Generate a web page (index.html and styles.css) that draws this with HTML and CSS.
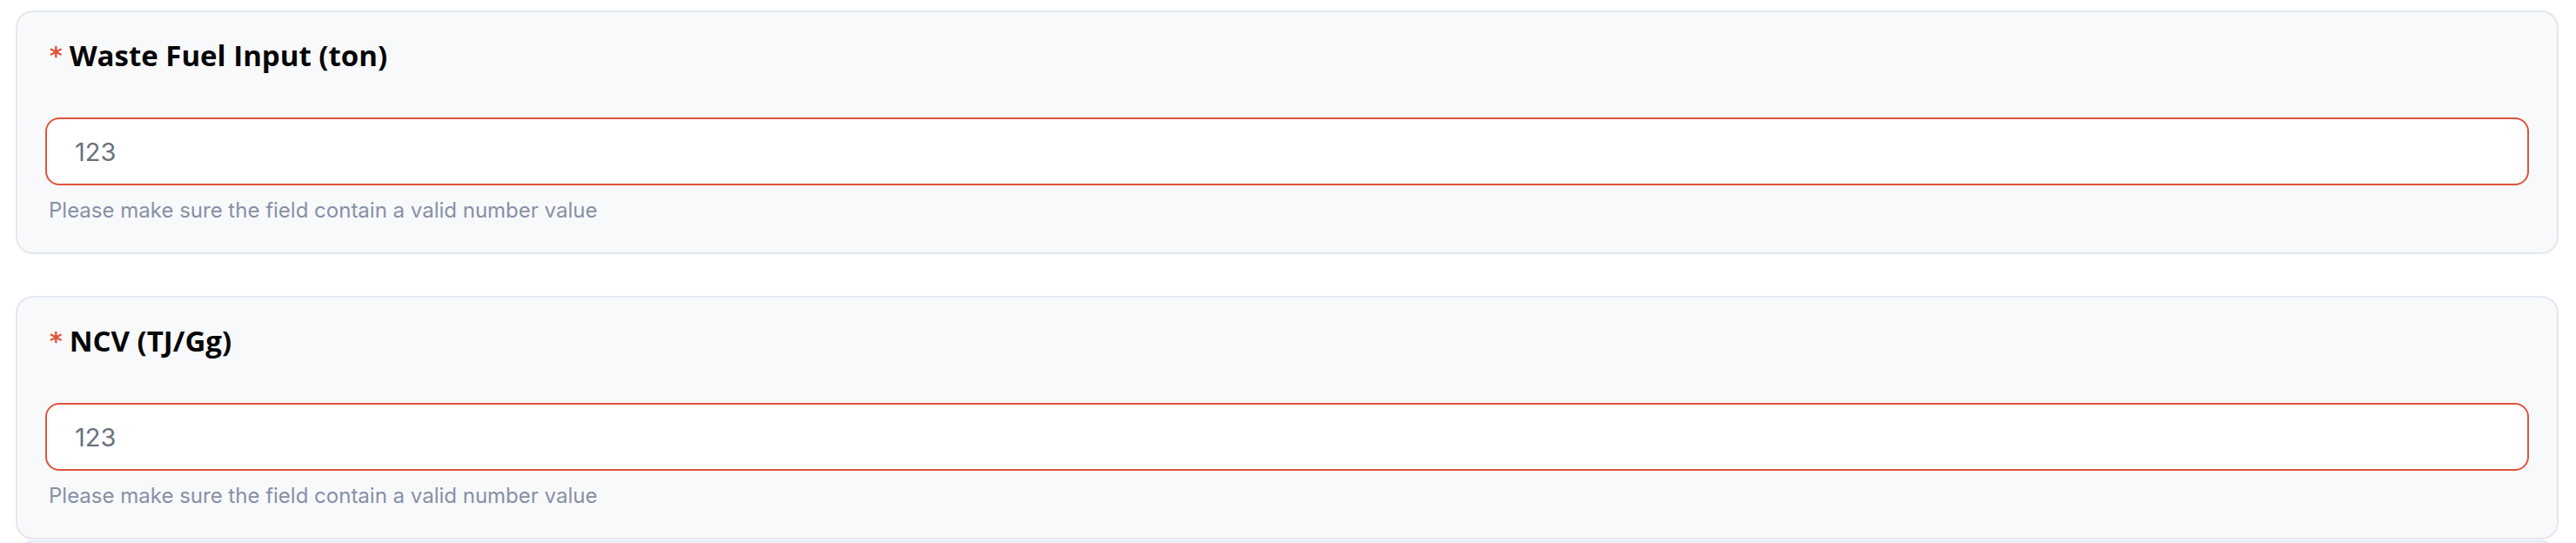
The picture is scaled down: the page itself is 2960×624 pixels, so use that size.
FILE: index.html
```html
<!DOCTYPE html>
<html lang="en">
<head>
<meta charset="utf-8">
<title>Form</title>
<link rel="stylesheet" href="styles.css">
</head>
<body>
<main class="page">
  <section class="card">
    <label class="field-label" for="f1"><span class="req">*</span>Waste Fuel Input (ton)</label>
    <div class="input-box"><input id="f1" class="input" type="text" value="123"></div>
    <p class="help">Please make sure the field contain a valid number value</p>
  </section>
  <section class="card card-gap">
    <label class="field-label" for="f2"><span class="req">*</span>NCV (TJ/Gg)</label>
    <div class="input-box"><input id="f2" class="input" type="text" value="123"></div>
    <p class="help">Please make sure the field contain a valid number value</p>
  </section>
  <section class="card card-next"></section>
</main>
</body>
</html>
```

FILE: styles.css
```css
html, body {
  margin: 0;
  padding: 0;
  background: #ffffff;
}

.page {
  padding: 12px 20px 0 18px;
  display: flex;
  flex-direction: column;
}

.card {
  box-sizing: border-box;
  height: 280px;
  background: #f8f9fb;
  border: 2px solid #e3e7ef;
  border-radius: 20px;
  padding: 26px 32px 32px 32px;
  display: flex;
  flex-direction: column;
}

.card-gap {
  margin-top: 48px;
}

.card-next {
  margin-top: 1px;
  flex-shrink: 0;
}

.field-label {
  display: flex;
  align-items: flex-start;
  height: 48px;
  padding-left: 5px;
  font-family: "Open Sans", "Noto Sans", sans-serif;
  font-weight: 700;
  font-size: 33px;
  line-height: 48px;
  color: #050505;
}

.req {
  color: #e1533c;
  font-family: "DejaVu Sans", sans-serif;
  font-weight: 700;
  font-size: 28px;
  line-height: 1;
  margin-top: 11px;
  margin-right: 8px;
}

.input-box {
  margin-top: 47px;
  box-sizing: border-box;
  height: 78px;
  border: 2px solid #e1533c;
  border-radius: 16px;
  background: #ffffff;
  display: flex;
  align-items: center;
  padding: 0 32px;
}

.input {
  border: 0;
  outline: 0;
  padding: 0;
  margin: 0;
  width: 100%;
  background: transparent;
  font-family: "Inter", sans-serif;
  font-size: 29px;
  color: #6a717d;
}

.help {
  margin: 13px 0 0 0;
  padding-left: 4px;
  font-family: "Inter", sans-serif;
  font-size: 24px;
  line-height: 32px;
  color: #8790a6;
}
```
